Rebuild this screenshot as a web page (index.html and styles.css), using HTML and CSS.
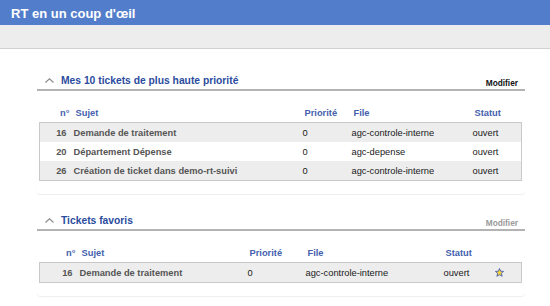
FILE: index.html
```html
<!DOCTYPE html>
<html lang="fr">

<head>
    <meta charset="UTF-8">
    <meta name="viewport" content="width=device-width, initial-scale=1.0">
    <title>RT en un coup d'œil</title>
    <link rel="stylesheet" href="styles.css">
</head>

<body>

    <div class="topbar">RT en un coup d'œil</div>
    <div class="menubar"></div>

    <div class="content">

        <div class="section">
            <div class="section-head">
                <svg class="toggle" width="9" height="5" viewBox="0 0 9 5">
                    <polyline points="0.5,4.5 4.5,0.8 8.5,4.5" fill="none" stroke="#8a8a8a" stroke-width="1.1"/>
                </svg>
                <span class="section-title">Mes 10 tickets de plus haute priorité</span>
                <span class="edit">Modifier</span>
            </div>
            <div class="section-body">
                <table class="tickets">
                    <colgroup>
                        <col style="width: 31px">
                        <col style="width: 229px">
                        <col style="width: 49px">
                        <col style="width: 121px">
                        <col>
                    </colgroup>
                    <thead>
                        <tr>
                            <th class="num">n°</th>
                            <th>Sujet</th>
                            <th>Priorité</th>
                            <th>File</th>
                            <th>Statut</th>
                        </tr>
                    </thead>
                    <tbody>
                        <tr>
                            <td class="num">16</td>
                            <td class="subject">Demande de traitement</td>
                            <td>0</td>
                            <td>agc-controle-interne</td>
                            <td>ouvert</td>
                        </tr>
                        <tr>
                            <td class="num">20</td>
                            <td class="subject">Département Dépense</td>
                            <td>0</td>
                            <td>agc-depense</td>
                            <td>ouvert</td>
                        </tr>
                        <tr>
                            <td class="num">26</td>
                            <td class="subject">Création de ticket dans demo-rt-suivi</td>
                            <td>0</td>
                            <td>agc-controle-interne</td>
                            <td>ouvert</td>
                        </tr>
                    </tbody>
                </table>
            </div>
        </div>

        <div class="section">
            <div class="section-head">
                <svg class="toggle" width="9" height="5" viewBox="0 0 9 5">
                    <polyline points="0.5,4.5 4.5,0.8 8.5,4.5" fill="none" stroke="#8a8a8a" stroke-width="1.1"/>
                </svg>
                <span class="section-title">Tickets favoris</span>
                <span class="edit muted">Modifier</span>
            </div>
            <div class="section-body">
                <table class="tickets">
                    <colgroup>
                        <col style="width: 37px">
                        <col style="width: 168px">
                        <col style="width: 58px">
                        <col style="width: 138px">
                        <col style="width: 50px">
                        <col>
                    </colgroup>
                    <thead>
                        <tr>
                            <th class="num">n°</th>
                            <th>Sujet</th>
                            <th>Priorité</th>
                            <th>File</th>
                            <th>Statut</th>
                            <th></th>
                        </tr>
                    </thead>
                    <tbody>
                        <tr>
                            <td class="num">16</td>
                            <td class="subject">Demande de traitement</td>
                            <td>0</td>
                            <td>agc-controle-interne</td>
                            <td>ouvert</td>
                            <td class="fav">
                                <svg width="9" height="9" viewBox="0 0 10 10">
                                    <polygon points="5,0.6 6.3,3.6 9.5,3.8 7.1,5.9 7.9,9.2 5,7.5 2.1,9.2 2.9,5.9 0.5,3.8 3.7,3.6"
                                        fill="#f3d33c" stroke="#3550b4" stroke-width="0.9" stroke-linejoin="round"/>
                                </svg>
                            </td>
                        </tr>
                    </tbody>
                </table>
            </div>
        </div>

    </div>

</body>

</html>
```

FILE: styles.css
```css
body {
    margin: 0;
    font-family: "Liberation Sans", Arial, sans-serif;
    background-color: #fff;
    color: #1a1a1a;
}

.topbar {
    height: 25px;
    box-sizing: border-box;
    padding: 2px 0 0 11px;
    line-height: 23px;
    background-color: #527dcb;
    color: #fff;
    font-size: 13px;
    font-weight: bold;
}

.menubar {
    height: 23px;
    background-color: #ededed;
    border-bottom: 1px solid #d2d2d2;
}

.content {
    padding: 25px 25px 0 37px;
}

.section {
    margin-bottom: 20px;
    border-radius: 0 0 4px 4px;
    box-shadow: 0 1px 1px rgba(0, 0, 0, 0.07);
}

.section-head {
    display: flex;
    align-items: flex-end;
    padding: 0 7px 1px 8px;
    border-bottom: 2px solid #b3b3b3;
}

.toggle {
    margin-bottom: 5px;
}

.section-title {
    margin-left: 7px;
    line-height: 14px;
    font-size: 10.3px;
    font-weight: bold;
    color: #2b4c9e;
}

.edit {
    margin-left: auto;
    line-height: 10px;
    font-size: 8.3px;
    font-weight: bold;
    color: #111;
}

.edit.muted {
    color: #9a9a9a;
}

.section-body {
    padding: 12px 3px 13px 2px;
}

.tickets {
    width: 100%;
    table-layout: fixed;
    border-collapse: collapse;
    font-size: 9.3px;
}

.tickets th {
    height: 19px;
    padding: 0 3px 0 5px;
    text-align: left;
    font-weight: bold;
    color: #4361ad;
    white-space: nowrap;
}

.tickets tbody {
    border: 1px solid #c9c9c9;
}

.tickets td {
    height: 19px;
    padding: 0 3px;
    white-space: nowrap;
}

.tickets tbody tr:nth-child(odd) {
    background-color: #ededed;
}

.tickets th.num {
    text-align: right;
    padding-right: 1px;
}

.tickets td.num {
    text-align: right;
    padding-right: 4px;
    font-weight: bold;
    color: #555;
}

.tickets td.subject {
    font-weight: bold;
    color: #555;
}

.tickets td.fav {
    padding-left: 4px;
}

.fav svg {
    display: block;
}
```
